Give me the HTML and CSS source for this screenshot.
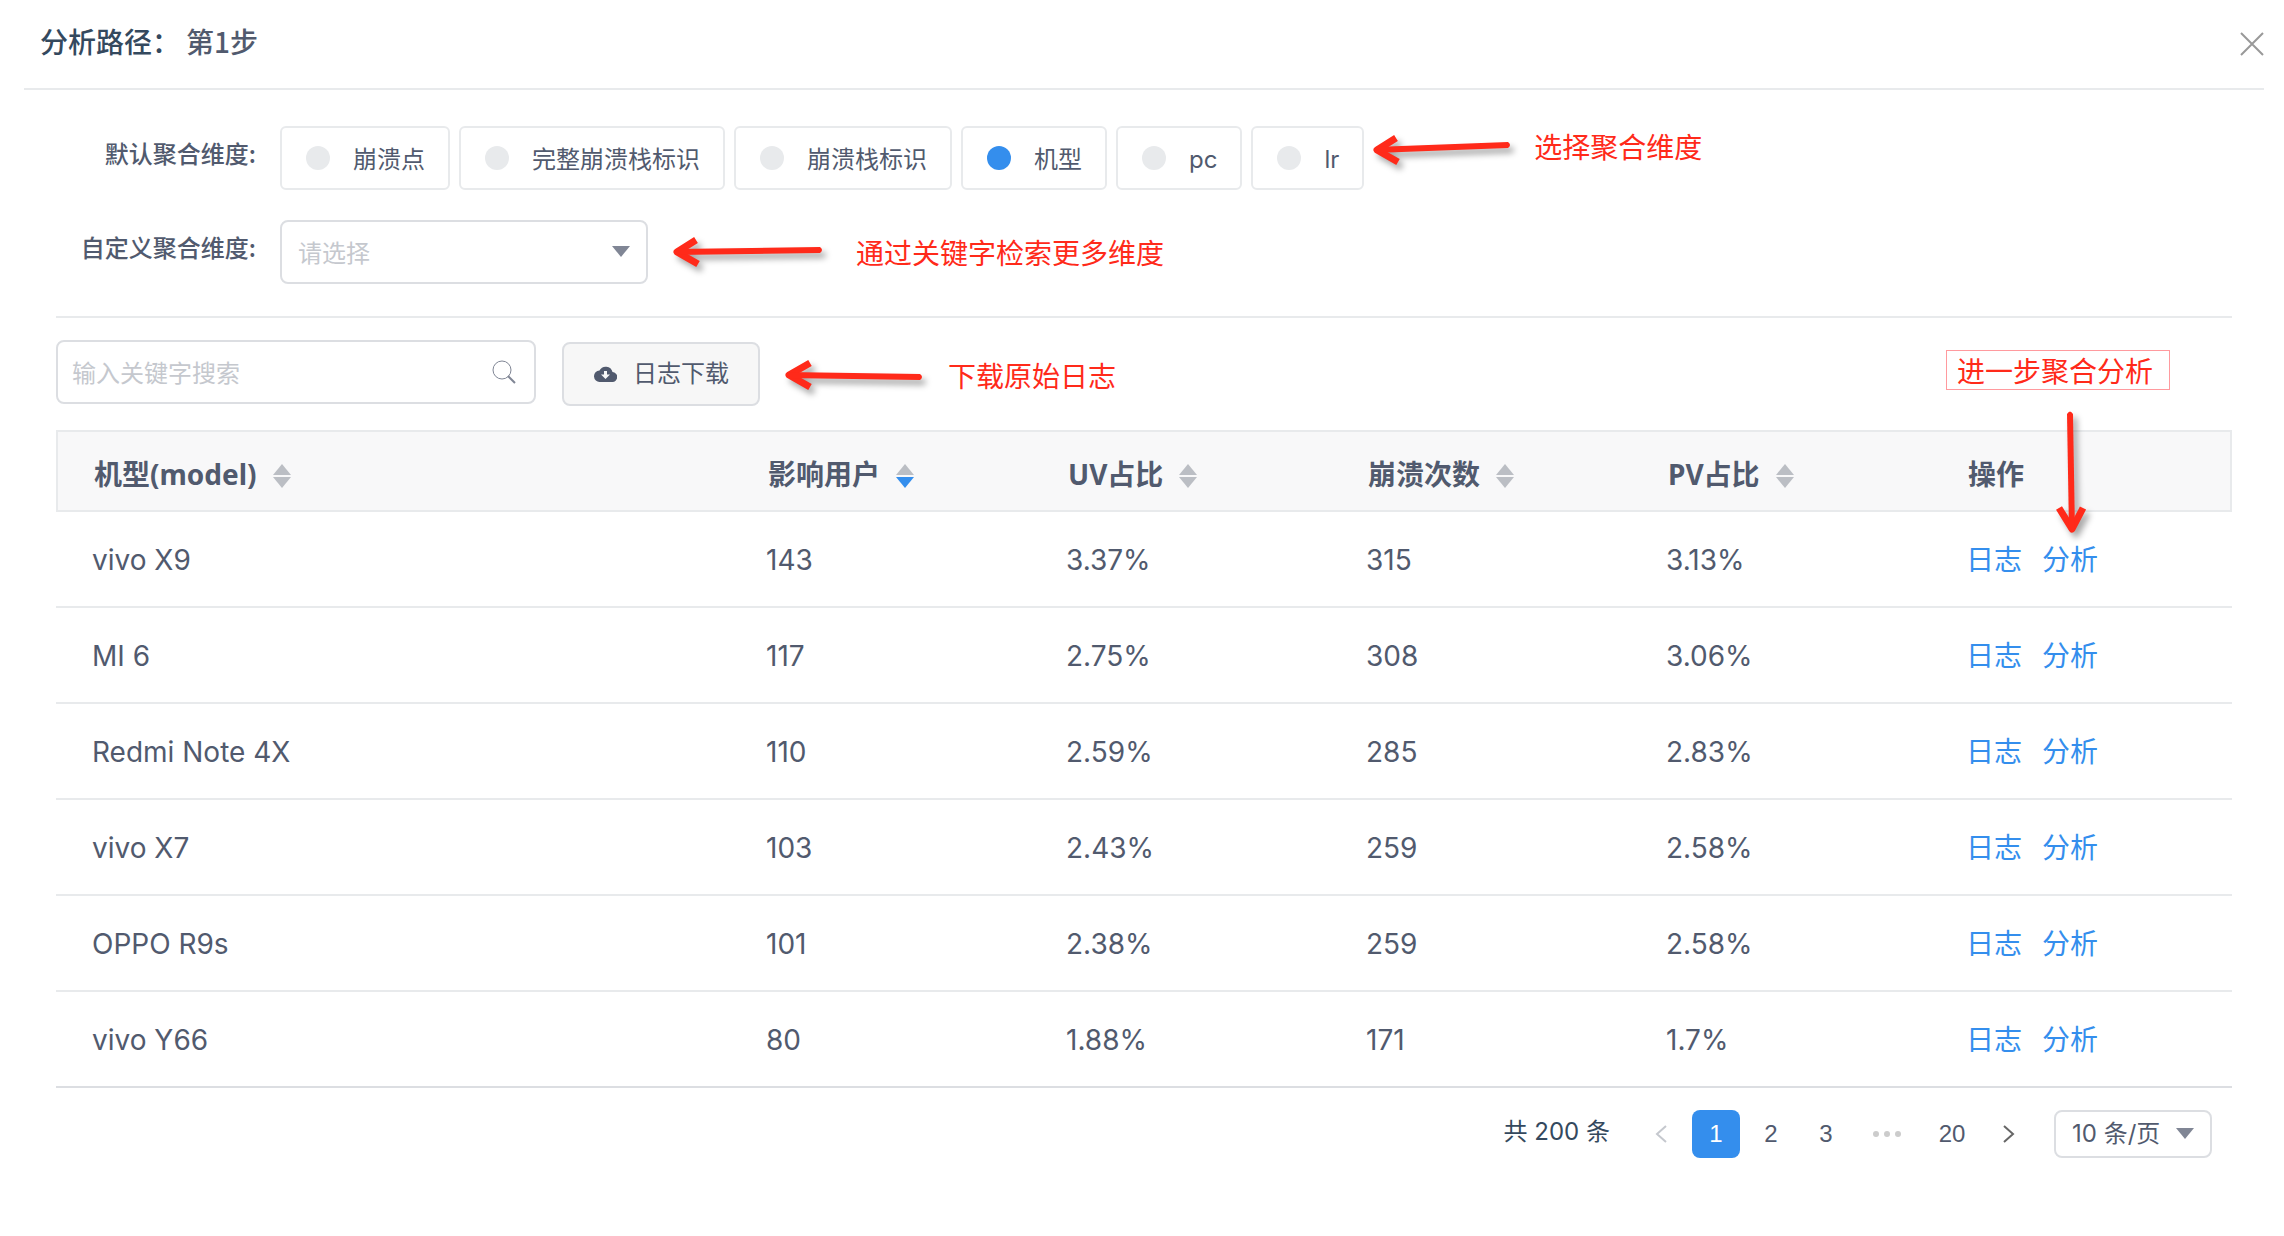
FILE: index.html
```html
<!DOCTYPE html>
<html lang="zh-CN">
<head>
<meta charset="utf-8">
<meta name="viewport" content="width=device-width, initial-scale=1">
<title>分析路径：第1步</title>
<link rel="stylesheet" href="styles.css">
</head>
<body>
<svg class="defs" aria-hidden="true">
  <symbol id="sort" viewBox="0 0 18 24">
    <path class="up" d="M9 0l9 11H0z"/>
    <path class="down" d="M9 24l9-11H0z"/>
  </symbol>
  <symbol id="caret" viewBox="0 0 18 11"><path d="M0 0h18L9 11z" fill="#808695"/></symbol>
</svg>
<header class="panel-head">
  <h1 class="title"><span class="title-path">分析路径：</span><span>第1步</span></h1>
  <button class="close" type="button" aria-label="关闭">
    <svg width="24" height="24" viewBox="0 0 24 24"><path d="M1 1l22 22M23 1L1 23" stroke="#999" stroke-width="2" fill="none"/></svg>
  </button>
</header>
<main class="panel">
  <form class="filters">
    <div class="field" role="radiogroup" aria-labelledby="dim-label">
      <span class="label" id="dim-label">默认聚合维度:</span>
      <div class="radios">
        <label class="radio"><input type="radio" name="dim">崩溃点</label>
        <label class="radio"><input type="radio" name="dim">完整崩溃栈标识</label>
        <label class="radio"><input type="radio" name="dim">崩溃栈标识</label>
        <label class="radio"><input type="radio" name="dim" checked>机型</label>
        <label class="radio"><input type="radio" name="dim">pc</label>
        <label class="radio"><input type="radio" name="dim">lr</label>
      </div>
      <div class="note note-radios">
        <svg class="arrow" width="140" height="32" viewBox="0 0 140 32"><path d="M24 4L5 16l21 12" class="arrow-head"/><path d="M3 13L136 8q4 3 0 6L3 19z" class="arrow-shaft"/></svg>
        <span>选择聚合维度</span>
      </div>
    </div>
    <div class="field">
      <label class="label" for="custom">自定义聚合维度:</label>
      <div class="select select-custom">
        <select id="custom" class="placeholder"><option>请选择</option></select>
        <svg class="caret" width="18" height="11"><use href="#caret"/></svg>
      </div>
      <div class="note note-custom">
        <svg class="arrow" width="154" height="32" viewBox="0 0 154 32"><path d="M24 4L5 16l21 12" class="arrow-head"/><path d="M3 13L148 11q4 3 0 6L3 19z" class="arrow-shaft"/></svg>
        <span>通过关键字检索更多维度</span>
      </div>
    </div>
  </form>
  <div class="toolbar">
    <div class="search">
      <input type="text" aria-label="搜索" placeholder="输入关键字搜索">
      <svg width="26" height="26" viewBox="0 0 26 26" fill="none" stroke="#808695"><circle cx="11" cy="11" r="9"/><path d="M17 17l7 7" stroke-width="2"/></svg>
    </div>
    <button class="download" type="button">
      <svg width="23" height="16" viewBox="0 0 23 16"><path d="M18.500 6A7 7 0 0 0 5.500 4.500A5.600 5.600 0 0 0 6 16H18A5 5 0 0 0 18.500 6z" fill="#515a6e"/><path d="M10 5h3v3.500h3L11.500 13 7 8.500h3z" fill="#f7f7f7"/></svg>
      日志下载
    </button>
    <div class="note note-download">
      <svg class="arrow" width="140" height="32" viewBox="0 0 140 32"><path d="M26 4L5 16l21 12" class="arrow-head"/><path d="M3 13L136 15q4 3 0 6L3 19z" class="arrow-shaft"/></svg>
      <span>下载原始日志</span>
    </div>
    <div class="note note-box">
      <span>进一步聚合分析</span>
      <svg class="arrow arrow-down" width="32" height="126" viewBox="0 0 32 126"><path d="M4 99l13 21 11-21" class="arrow-head"/><path d="M12 5q3-5 6 0L20 122h-6z" class="arrow-shaft"/></svg>
    </div>
  </div>
  <table class="data">
    <colgroup><col><col class="c-num"><col class="c-num"><col class="c-num"><col class="c-num"><col class="c-act"></colgroup>
    <thead>
      <tr>
        <th>机型(model)<svg class="sort"><use href="#sort"/></svg></th>
        <th>影响用户<svg class="sort desc"><use href="#sort"/></svg></th>
        <th>UV占比<svg class="sort"><use href="#sort"/></svg></th>
        <th>崩溃次数<svg class="sort"><use href="#sort"/></svg></th>
        <th>PV占比<svg class="sort"><use href="#sort"/></svg></th>
        <th>操作</th>
      </tr>
    </thead>
    <tbody>
      <tr><td>vivo X9</td><td>143</td><td>3.37%</td><td>315</td><td>3.13%</td><td><a href="#">日志</a><a href="#">分析</a></td></tr>
      <tr><td>MI 6</td><td>117</td><td>2.75%</td><td>308</td><td>3.06%</td><td><a href="#">日志</a><a href="#">分析</a></td></tr>
      <tr><td>Redmi Note 4X</td><td>110</td><td>2.59%</td><td>285</td><td>2.83%</td><td><a href="#">日志</a><a href="#">分析</a></td></tr>
      <tr><td>vivo X7</td><td>103</td><td>2.43%</td><td>259</td><td>2.58%</td><td><a href="#">日志</a><a href="#">分析</a></td></tr>
      <tr><td>OPPO R9s</td><td>101</td><td>2.38%</td><td>259</td><td>2.58%</td><td><a href="#">日志</a><a href="#">分析</a></td></tr>
      <tr><td>vivo Y66</td><td>80</td><td>1.88%</td><td>171</td><td>1.7%</td><td><a href="#">日志</a><a href="#">分析</a></td></tr>
    </tbody>
  </table>
  <nav class="pager" aria-label="分页">
    <span class="total">共 200 条</span>
    <button class="page" type="button" aria-label="上一页" disabled><svg width="12" height="18" viewBox="0 0 12 18"><path d="M11 1L2 9l9 8" fill="none" stroke="#c5c8ce" stroke-width="2"/></svg></button>
    <button class="page current" type="button" aria-current="page">1</button>
    <button class="page" type="button">2</button>
    <button class="page" type="button">3</button>
    <button class="page more" type="button" aria-label="向后 5 页"><svg width="28" height="6" viewBox="0 0 28 6" fill="#ccc"><circle cx="3" cy="3" r="3"/><circle cx="14" cy="3" r="3"/><circle cx="25" cy="3" r="3"/></svg></button>
    <button class="page last" type="button">20</button>
    <button class="page next" type="button" aria-label="下一页"><svg width="12" height="18" viewBox="0 0 12 18"><path d="M1 1l9 8-9 8" fill="none" stroke="#666" stroke-width="2"/></svg></button>
    <div class="select select-size">
      <select aria-label="每页条数"><option>10 条/页</option></select>
      <svg class="caret" width="18" height="11"><use href="#caret"/></svg>
    </div>
  </nav>
</main>
</body>
</html>
```
FILE: styles.css
```css
* { box-sizing: border-box; }

body {
  margin: 0;
  padding: 0 20px 0 24px;
  background: #fff;
  color: #515a6e;
  font-family: Inter, "Noto Sans CJK SC", sans-serif;
  font-size: 24px;
  line-height: 36px;
}

button, input, select { font: inherit; color: inherit; margin: 0; }
button { cursor: pointer; }
svg { display: block; flex: none; }
.defs { position: absolute; width: 0; height: 0; }

.panel-head {
  display: flex;
  justify-content: space-between;
  align-items: center;
  height: 90px;
  padding-left: 16px;
  border-bottom: 2px solid #e8eaec;
}
.title {
  display: flex;
  gap: 6px;
  margin: 0;
  padding-bottom: 6px;
  font: 500 28px/40px "Noto Sans CJK SC", sans-serif;
}
.title-path { color: #34495e; }
.close { padding: 0; border: 0; background: none; }

.panel { padding: 0 32px; }

.filters {
  display: flex;
  flex-direction: column;
  gap: 30px;
  padding: 36px 0 32px;
  border-bottom: 2px solid #e8eaec;
}
.field { display: flex; }
.label {
  width: 200px;
  margin-right: 24px;
  padding-top: 9px;
  text-align: right;
  font-weight: 500;
  font-family: "Noto Sans CJK SC", sans-serif;
}
.radios { display: flex; gap: 9px; }
.radio {
  display: flex;
  align-items: center;
  height: 64px;
  padding: 4px 23px 0 24px;
  border: 2px solid #e8eaec;
  border-radius: 6px;
  white-space: nowrap;
}
.radio input {
  appearance: none;
  width: 24px;
  height: 24px;
  margin: 0 23px 4px 0;
  border-radius: 50%;
  background: #e8eaec;
}
.radio input:checked { background: #348eed; }

.select { position: relative; }
.select select {
  appearance: none;
  width: 100%;
  height: 100%;
  border: 2px solid #dcdee2;
  border-radius: 8px;
  background: #fff;
}
.select .placeholder { color: #c5c8ce; }
.caret {
  position: absolute;
  right: 18px;
  top: 50%;
  margin-top: -6px;
  pointer-events: none;
}
.select-custom { width: 368px; height: 64px; }
.select-custom select { padding: 4px 40px 0 16px; }

.note {
  display: flex;
  color: #ff2a1a;
  font-family: "Noto Sans CJK SC", sans-serif;
  font-size: 28px;
  line-height: 40px;
  white-space: nowrap;
}
.arrow { overflow: visible; filter: drop-shadow(4px 5px 3px rgba(0, 0, 0, .35)); }
.arrow-head { fill: none; stroke: #ff2a1a; stroke-width: 7; stroke-linejoin: round; }
.arrow-shaft { fill: #ff2a1a; }
.note-radios { gap: 22px; margin-left: 8px; }
.note-radios .arrow { margin-top: 8px; }
.note-custom { gap: 30px; align-items: center; margin-left: 24px; }
.note-download { gap: 24px; align-items: center; margin-left: 24px; padding-top: 2px; }
.note-box {
  position: relative;
  align-self: flex-start;
  margin: 32px 62px 0 auto;
  padding: 0 16px 0 10px;
  border: 1px solid #ff9a9e;
  line-height: 38px;
}
.arrow-down { position: absolute; top: 58px; left: 108px; }

.toolbar { display: flex; align-items: center; height: 112px; }
.search { position: relative; width: 480px; margin-bottom: 4px; }
.search input {
  display: block;
  width: 100%;
  height: 64px;
  padding: 2px 56px 0 14px;
  border: 2px solid #dcdee2;
  border-radius: 8px;
}
.search input::placeholder { color: #c5c8ce; opacity: 1; }
.search svg { position: absolute; top: 19px; right: 19px; }
.download {
  display: flex;
  align-items: center;
  gap: 16px;
  height: 64px;
  margin-left: 26px;
  padding: 0 29px 0 30px;
  border: 2px solid #dcdee2;
  border-radius: 8px;
  background: #f7f7f7;
}

.data {
  width: 100%;
  table-layout: fixed;
  border-collapse: separate;
  border-spacing: 0;
  border-bottom: 2px solid #dcdee2;
  font-size: 28px;
  line-height: 40px;
}
.c-num { width: 300px; }
.c-act { width: 302px; }
.data th {
  height: 82px;
  padding: 6px 0 0 38px;
  border: solid #e8eaec;
  border-width: 2px 0;
  background: #f8f8f9;
  text-align: left;
  font-weight: 700;
  font-family: "Noto Sans", "Noto Sans CJK SC", sans-serif;
}
.data th:first-child { border-left-width: 2px; padding-left: 36px; }
.data th:last-child { border-right-width: 2px; }
.data td { height: 96px; padding: 2px 0 0 36px; border-bottom: 2px solid #e8eaec; }
.data tr:last-child td { height: 94px; border-bottom: 0; }
.data a { margin-right: 20px; color: #348eed; text-decoration: none; }
.sort { display: inline-block; width: 18px; height: 24px; margin-left: 16px; vertical-align: -3px; color: #bbbec4; fill: #bbbec4; }
.sort.desc { color: #348eed; }
.down { fill: currentColor; }

.pager {
  display: flex;
  align-items: center;
  justify-content: flex-end;
  gap: 7px;
  padding: 22px 20px 78px 0;
}
.total { margin-right: 20px; padding-bottom: 4px; color: #34495e; }
.page {
  display: flex;
  align-items: center;
  justify-content: center;
  width: 48px;
  height: 48px;
  padding: 0;
  border: 0;
  border-radius: 8px;
  background: #fff;
  font-family: "Liberation Sans", sans-serif;
}
.page.current { background: #348eed; color: #fff; }
.page.more { width: 60px; }
.page.last { width: 56px; }
.page.next { width: 44px; }
.select-size { width: 158px; height: 48px; margin-left: 16px; }
.select-size select { padding: 0 36px 0 16px; }
```
